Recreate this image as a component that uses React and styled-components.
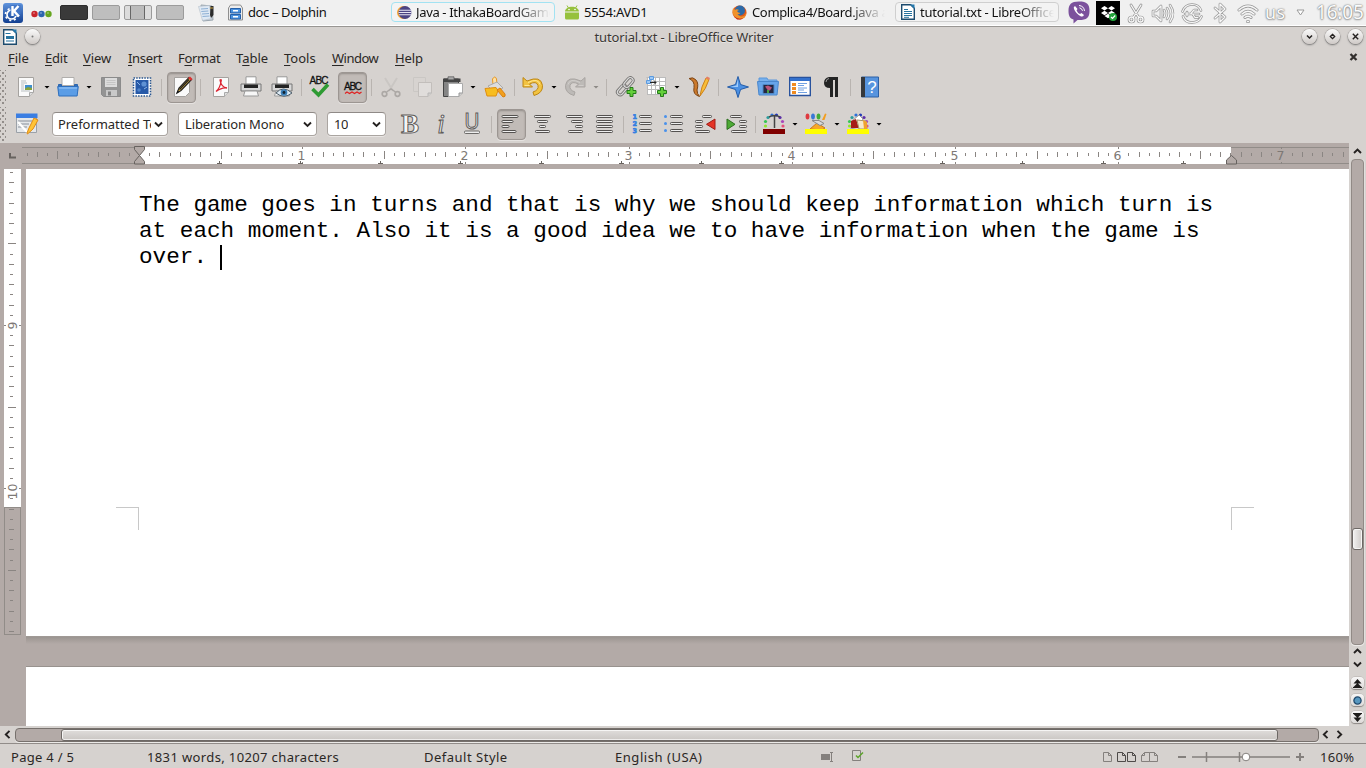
import React from "react";
import styled, { createGlobalStyle, css } from "styled-components";

const UI = `"Noto Sans", "Open Sans", sans-serif`;
const BG = "#d6d2cf";
const TAUPE = "#b3aaa7";

const Global = createGlobalStyle`
  * { box-sizing: border-box; }
  body { margin: 0; background: ${BG}; overflow: hidden; }
  svg { display: block; flex: none; overflow: visible; }
`;

const Desktop = styled.div`
  width: 1366px;
  height: 768px;
  display: flex;
  flex-direction: column;
  background: ${BG};
  color: #2a2725;
  font: 13px/18px ${UI};
  white-space: nowrap;
  overflow: hidden;
`;

/* ---------- desktop panel ---------- */
const Panel = styled.header`
  height: 27px;
  flex: none;
  display: flex;
  align-items: flex-start;
  padding-left: 3px;
  background: #f0f0f0;
  border-bottom: 1px solid #999693;
  box-shadow: inset 0 -1px #fff;
`;
const PanelItem = styled.div`
  height: 25px;
  width: ${(p) => p.$w}px;
  margin-left: ${(p) => p.$gap || 0}px;
  flex: none;
  display: flex;
  align-items: center;
`;
const Pager = styled.div`
  display: flex;
  gap: 4px;
  height: 25px;
  align-items: center;
  margin-left: 8px;
`;
const PagerDesk = styled.div`
  width: 28px;
  height: 15px;
  border-radius: 2px;
  border: 1px solid ${(p) => (p.$active ? "#2d2d2d" : "#9b9b9b")};
  background: ${(p) => (p.$active ? "#3a3a3a" : p.$split ? "linear-gradient(90deg,#dcdcdc 5px,#666 5px,#666 6px,#bcbcbc 6px,#bcbcbc 19px,#666 19px,#666 20px,#dcdcdc 20px)" : "#bebebe")};
`;
const Task = styled.div`
  width: 164px;
  height: 20px;
  margin: 2px 0 0 ${(p) => p.$gap}px;
  padding: 0 4px 0 5px;
  flex: none;
  display: flex;
  align-items: center;
  gap: ${(p) => p.$inner || 5}px;
  border: 1px solid ${(p) => p.$edge || "transparent"};
  border-radius: 4px;
  background: ${(p) => (p.$edge ? "#f3f3f3" : "transparent")};
  color: #111;
`;
const TaskText = styled.span`
  flex: 1;
  overflow: hidden;
  letter-spacing: ${(p) => p.$ls || 0}px;
  ${(p) => p.$fade && css`mask-image: linear-gradient(90deg, #000 calc(100% - 36px), transparent);`}
`;
const TrayText = styled.span`
  color: #fbfbfb;
  font: ${(p) => p.$size}px/25px ${UI};
  letter-spacing: ${(p) => p.$ls || 0}px;
  text-shadow: 0 0 1px #777, 0 0 2px #888, 0 1px 2px #aaa;
`;

/* ---------- window frame ---------- */
const TitleBar = styled.div`
  height: 19px;
  flex: none;
  display: flex;
  align-items: center;
  justify-content: space-between;
  padding: 0 3px;
`;
const TitleSide = styled.div`
  width: 70px;
  display: flex;
  align-items: center;
  justify-content: ${(p) => (p.$end ? "flex-end" : "flex-start")};
  gap: ${(p) => p.$gap}px;
`;
const Title = styled.div`
  padding-left: 2px;
  letter-spacing: -0.13px;
  color: #3a3735;
  text-shadow: 0 1px #e8e5e3;
`;
const RoundButton = styled.span`
  width: 15px;
  height: 15px;
  border-radius: 50%;
  display: grid;
  place-items: center;
  background: linear-gradient(#fafafa, #cfcac7);
  box-shadow: 0 1px 2px #777, 0 0 0 0.5px #a9a5a2;
`;
const MenuBar = styled.nav`
  height: 24px;
  flex: none;
  display: flex;
  align-items: center;
  padding: 0 8px 0 8px;
`;
const MenuItem = styled.span`
  width: ${(p) => p.$w}px;
  letter-spacing: ${(p) => p.$ls || 0}px;
  u { text-decoration-thickness: 1px; text-underline-offset: 2px; }
`;
const Grow = styled.div`flex: 1;`;

/* ---------- toolbars ---------- */
const Toolbar = styled.div`
  height: ${(p) => p.$h}px;
  padding-top: ${(p) => p.$pt || 0}px;
  flex: none;
  display: flex;
  align-items: center;
`;
const Grip = styled.div`
  width: 8px;
  height: 34px;
  background: radial-gradient(circle, #918c89 0.7px, transparent 1.1px) 0 0 / 6px 6px,
    radial-gradient(circle, #918c89 0.7px, transparent 1.1px) 3px 3px / 6px 6px;
  clip-path: inset(0 2px 0 0);
`;
const Tool = styled.div`
  width: ${(p) => (p.$on ? 29 : 22)}px;
  height: ${(p) => (p.$on ? 31 : 22)}px;
  margin-left: ${(p) => p.$gap}px;
  flex: none;
  display: grid;
  place-items: center;
  opacity: ${(p) => (p.$off ? 0.65 : 1)};
  ${(p) => p.$on && css`
    background: #c1bbb7;
    border: 1px solid #9c9692;
    border-radius: 4px;
    box-shadow: inset 0 1px 2px #938d89, 0 1px #e6e3e1;
  `}
`;
const Sep = styled.div`
  width: 1px;
  height: 17px;
  margin-left: ${(p) => p.$gap}px;
  background: #b9b4b0;
`;
const Drop = styled.div`
  width: 6px;
  height: 3px;
  margin-left: ${(p) => p.$gap}px;
  background: ${(p) => (p.$off ? "#8d8986" : "#000")};
  clip-path: polygon(0 0, 100% 0, 50% 100%);
`;
const Combo = styled.div`
  width: ${(p) => p.$w}px;
  height: 24px;
  margin-left: ${(p) => p.$gap}px;
  padding: 0 4px 0 ${(p) => p.$pad || 6}px;
  flex: none;
  display: flex;
  align-items: center;
  justify-content: space-between;
  gap: 3px;
  background: #fff;
  border: 1px solid #aaa5a1;
  border-top-color: #8f8a87;
  border-radius: 4px;
  box-shadow: 0 1px #e9e6e4;
`;
const ComboText = styled.span`
  overflow: hidden;
  letter-spacing: ${(p) => p.$ls || 0}px;
`;

/* ---------- document ---------- */
const Work = styled.main`
  height: 583px;
  flex: none;
  display: flex;
`;
const Canvas = styled.section`
  width: 1349px;
  display: flex;
  flex-direction: column;
  background: ${TAUPE};
`;
const RulerRow = styled.div`
  height: 26px;
  flex: none;
  display: flex;
  padding-top: 4px;
`;
const RulerCorner = styled.div`
  width: 22px;
  height: 17px;
  padding: 6px 0 0 9px;
`;
const HRuler = styled.div`
  width: 1327px;
  height: 17px;
  background: linear-gradient(90deg, transparent 117px, #fff 117px, #fff 1209px, transparent 1209px),
    linear-gradient(#918c88 1px, transparent 1px, transparent 16px, #918c88 16px);
`;
const DocRow = styled.div`
  flex: 1;
  display: flex;
`;
const VRuler = styled.div`
  width: 17px;
  height: 466px;
  margin: 0 5px 0 4px;
  border: solid #918c88;
  border-width: 0 1px 1px;
  border-image: linear-gradient(#fff 338px, #918c88 338px) 1;
  background: linear-gradient(#fff 338px, #918c88 338px, #918c88 339px, transparent 339px);
`;
const Pages = styled.div`
  flex: 1;
  display: flex;
  flex-direction: column;
`;
const Page = styled.article`
  height: 467px;
  padding: 23px 0 0 113px;
  background: #fff;
  color: #000;
`;
const Paragraph = styled.p`
  margin: 0;
  height: 78px;
  font: 22.67px/26px "Liberation Mono", monospace;
  white-space: pre;
`;
const Caret = styled.span`
  display: inline-block;
  width: 2px;
  height: 25px;
  margin-left: -1px;
  vertical-align: -7px;
  background: #000;
`;
const Crops = styled.div`
  display: flex;
  justify-content: space-between;
  width: 1138px;
  margin: 237px 0 0 -23px;
`;
const Crop = styled.span`
  width: 23px;
  height: 23px;
  border-top: 1px solid #c8c8c8;
  ${(p) => (p.$left ? "border-left" : "border-right")}: 1px solid #c8c8c8;
`;
const PageGap = styled.div`
  height: 31px;
  border-bottom: 1px solid #98928e;
  background: linear-gradient(#a59e9a 0, #9a9490 1px, #a29b97 3px, ${TAUPE} 8px);
`;
const NextPage = styled.article`
  flex: 1;
  background: #fff;
`;

/* ---------- scroll bars and status ---------- */
const VScroll = styled.aside`
  width: 17px;
  display: flex;
  flex-direction: column;
  align-items: center;
  padding-top: 5px;
`;
const VTrough = styled.div`
  width: 13px;
  height: 486px;
  flex: none;
  margin: 4px 0 3px;
  padding: 370px 1px 0;
  border: 1px solid #918a86;
  border-radius: 4px;
  background: ${TAUPE};
  box-shadow: 0 1px #eceae8, 1px 0 #e2dfdd;
`;
const VThumb = styled.div`
  height: 22px;
  margin: -2px -1px 0;
  border: 1px solid #6d6865;
  border-radius: 3px;
  background: linear-gradient(90deg, #f2f1f0, #cfcbc8);
  box-shadow: inset 0 0 0 1px #f6f5f4;
`;
const NavButton = styled.div`
  width: 13px;
  height: 12px;
  margin-top: ${(p) => p.$gap}px;
  flex: none;
  display: grid;
  place-items: center;
  border-radius: 4px;
  background: linear-gradient(#f7f6f6, #dddad8);
  box-shadow: 0 1px 1px #8d8885, 0 0 0 0.5px #b5b0ad;
`;
const HScroll = styled.div`
  height: 17px;
  flex: none;
  display: flex;
  align-items: center;
  padding-left: 4px;
`;
const HTrough = styled.div`
  width: 1304px;
  height: 14px;
  margin: 0 3px 0 4px;
  padding-left: 45px;
  border: 1px solid #77716d;
  border-radius: 4px;
  background: ${TAUPE};
  box-shadow: 0 1px #eceae8;
`;
const HThumb = styled.div`
  width: 1217px;
  height: 12px;
  border: 1px solid #6d6865;
  border-radius: 3px;
  background: linear-gradient(#e0dddb, #cac6c3);
  box-shadow: inset 0 1px #f6f5f4, inset 1px 0 #f6f5f4, inset 0 -1px #eeeceb;
`;
const ScrollArrow = styled.span`margin-right: ${(p) => p.$gap || 0}px;`;
const StatusBar = styled.footer`
  height: 25px;
  flex: none;
  display: flex;
  align-items: center;
  border-top: 1px solid #918c89;
  padding: 1px 0 0 11px;
`;
const StatusText = styled.span`
  width: ${(p) => p.$w}px;
  flex: none;
  letter-spacing: ${(p) => p.$ls || 0}px;
`;
const StatusIcon = styled.span`margin-right: ${(p) => p.$gap}px;`;

/* ---------- drawings ---------- */
const I = ({ s = 22, children, ...r }) => (
  <svg width={s} height={s} viewBox="0 0 22 22" fill="none" {...r}>{children}</svg>
);
const Chevron = ({ d = "M1 1.500 4.500 5 8 1.500", w = 9, h = 7, c = "#242120", sw = 1.9 }) => (
  <svg width={w} height={h} viewBox={`0 0 ${w} ${h}`} fill="none" stroke={c} strokeWidth={sw}><path d={d} /></svg>
);
const UP = "M1 5 4.500 1.500 8 5";
const Left = () => <Chevron w={7} h={9} d="M5.500 .8 1.800 4.500 5.500 8.200" />;
const Right = () => <Chevron w={7} h={9} d="M1.500 .8 5.200 4.500 1.500 8.200" />;

const Kde = () => (
  <svg width="20" height="20" viewBox="0 0 20 20">
    <defs><linearGradient id="kg" x2="0" y2="1"><stop stopColor="#5f93dc" /><stop offset="1" stopColor="#123f91" /></linearGradient></defs>
    <rect width="20" height="20" rx="3" fill="url(#kg)" />
    <circle cx="8.500" cy="11.500" r="4.500" fill="none" stroke="#fff" strokeWidth="1.700" />
    <circle cx="8.500" cy="11.500" r="6" fill="none" stroke="#fff" strokeWidth="1.700" strokeDasharray="2 2.710" />
    <path d="M7.500 2h10v9l-3 2H7.500z" fill="#4276c8" />
    <path d="M9.500 3v10M15.500 3l-4.500 5 5 5.500" fill="none" stroke="#fff" strokeWidth="2.400" />
  </svg>
);
const Dots = () => (
  <svg width="21" height="8" viewBox="0 0 21 8">
    <circle cx="3.500" cy="5" r="3.200" fill="#c9252c" /><circle cx="10.500" cy="5" r="3.200" fill="#2c65ae" /><circle cx="17.500" cy="5" r="3.200" fill="#65a51e" />
    <path d="M2 4h2M9 4h2M16 4h2" stroke="#fff" strokeOpacity=".5" />
  </svg>
);
const Notes = () => (
  <svg width="17" height="18" viewBox="0 0 17 18">
    <path d="M3 1l11 1 1 14-10 1z" fill="#c9d0d8" stroke="#9aa5ae" />
    <path d="M.5 2.500l11-1 2 13-9 2z" fill="#dfe9f4" stroke="#b6c0ca" strokeWidth=".6" />
    <path d="M3 5l7-.5M3.300 7.500l7-.5M4 10l7-.5M4.500 12.500l7-.5" stroke="#8eb0d4" />
    <path d="M12.500 2h3v9l-2.500 3-1-3z" fill="#2c2c2c" /><path d="M12 4h3" stroke="#c8a23c" />
  </svg>
);
const Cabinet = () => (
  <svg width="15" height="17" viewBox="0 0 15 17">
    <path d="M2.500 1h10l2 3v12H.5V4z" fill="#ececec" stroke="#8f8f8f" />
    <path d="M2.500 4.500h10v4.500h-10zM2.500 10.500h10v4.500h-10z" fill="#4b92df" stroke="#245fa8" />
    <path d="M5 6h5v1.600H5zM5 12h5v1.600H5z" fill="#fff" />
  </svg>
);
const Eclipse = () => (
  <svg width="15" height="15" viewBox="0 0 15 15">
    <circle cx="6.500" cy="7.500" r="6.500" fill="#f2a331" /><circle cx="8" cy="7.500" r="6.500" fill="#4b4384" />
    <path d="M2 5.200h12M1.500 7.500h13M2 9.800h12" stroke="#e6e3f2" strokeWidth="1.100" />
  </svg>
);
const Android = () => (
  <svg width="14" height="15" viewBox="0 0 14 15">
    <path d="M0 6.500C.3 0 13.700 0 14 6.500zM0 7.500h14V13q0 1.500-1.500 1.500h-11Q0 14.500 0 13z" fill="#96c13d" />
    <path d="M3.500 3 2 .5M10.500 3 12 .5" stroke="#96c13d" /><circle cx="4" cy="4.500" r=".8" fill="#fff" /><circle cx="10" cy="4.500" r=".8" fill="#fff" />
  </svg>
);
const Firefox = () => (
  <svg width="15" height="15" viewBox="0 0 15 15">
    <circle cx="7.500" cy="7.500" r="7" fill="#dd5a1c" /><circle cx="8" cy="5.500" r="5" fill="#2c6aa8" />
    <path d="M1 3q-1.500 6 2 9 4 3.500 8.500 1 3-2 3-6-1.500 5-5.500 4.500-2.500-.3-3.500-2.500 2 .5 3-1Q6 8 5 6l2-1Q4.500 3.500 3 5z" fill="#f0922b" />
    <path d="M2 11q4 4 9 2l-2 1.500H5z" fill="#c6301d" />
  </svg>
);
const WriterDoc = ({ solid }) => (
  <svg width="14" height="16" viewBox="0 0 14 16">
    <path d="M.7.7h9L13.300 4.300v11H.7z" fill="#fff" stroke="#1c4b6e" strokeWidth="1.400" />
    <path d="M9 .5h4.500v4.500z" fill="#2479ad" />
    {solid ? <path d="M3 7h8v3H3zM3 11.500h8v1H3zM2.500 4h5v1h-5z" fill="#26739f" /> : <path d="M3 5.500h4M3 7.500h8M3 9.500h8M3 11.500h8M3 13.300h5" stroke="#26739f" />}
  </svg>
);
const Viber = () => (
  <svg width="22" height="23" viewBox="0 0 22 23">
    <path d="M11 .5C3 .5.5 3.500.5 10c0 5 1.500 7.500 5 8.500V22.500l4-3.500c9 .3 12-2 12-9S19 .5 11 .5z" fill="#7b519c" />
    <path d="M7 5q-2 1-1 3 2 5 7 7.500 2 .5 3-1.500l-2.500-2-1.500 1q-2.500-1-3.500-3.800L9.500 8z" fill="#fff" />
    <path d="M11 4.500q5 .5 5.500 5.500M11.500 6.800q2.500.5 3 3" fill="none" stroke="#fff" />
  </svg>
);
const Dropbox = () => (
  <svg width="24" height="24" viewBox="0 0 24 24">
    <rect width="24" height="24" fill="#000" />
    <path d="M8.500 5 12 7.300 8.500 9.500 5 7.300zM15.500 5 19 7.300 15.500 9.500 12 7.300zM8.500 9.700l3.500 2.200-3.500 2.300L5 12zM15.500 9.700 19 12l-3.500 2.200-3.500-2.300zM8.500 15l3.500-2.200 3.500 2.200-3.500 2.300z" fill="#fff" />
    <circle cx="17" cy="16" r="4" fill="#22a23a" /><path d="M15 16l1.500 1.500 2.700-3" stroke="#fff" fill="none" strokeWidth="1.200" />
  </svg>
);
const Outline = ({ d, w = 22, sw = 2 }) => (
  <svg width={w} height="24" viewBox={`0 0 ${w} 24`} fill="none" strokeLinecap="round" strokeLinejoin="round">
    <path d={d} stroke="#979797" strokeWidth={sw + 1.4} /><path d={d} stroke="#f8f8f8" strokeWidth={sw} />
  </svg>
);
const sheet = <path d="M3.500 1.500h15v15l-4 4h-11z" fill="#fafafa" stroke="#a5a29f" />;
const New = () => <I>{sheet}<path d="M6 5h5M6 7h6M6 9h3M6 11h3M6 13h3M6 15h9" stroke="#b9bfc2" /><path d="M10 9h7v5h-7z" fill="#3f8fce" /><path d="M10 12.500l3-1.500 4 1v2h-7z" fill="#87a43b" /><path d="M18.500 16.500h-4v4" fill="#ddd" stroke="#aaa" /></I>;
const Open = () => <I><path d="M5 1.500h12v8H5z" fill="#fff" stroke="#b0aeac" /><path d="M1.500 8.500h3v3h13v-3h3v6h-19z" fill="#346fba" stroke="#2b65ad" /><path d="M.7 10.500h20.600l-1.200 9.500H1.900z" fill="#5b9de6" stroke="#2f6fbd" /><path d="M2 12h18" stroke="#9fcbfa" /></I>;
const Save = () => <I><path d="M2 1.500h18.500v19H3.500l-2-2v-17z" fill="#949494" stroke="#8b8b8b" /><path d="M5 2h12v9H5z" fill="#dcdcdc" /><path d="M6.500 4.500h9M6.500 6.500h9M6.500 8.500h9" stroke="#c5c5c5" /><path d="M6 14h11v6H6z" fill="#c9c9c9" /><path d="M8 15.500h3v4H8z" fill="#838383" /></I>;
const Stamp = () => <I><rect x="2.500" y="2" width="17" height="18" fill="#fff" stroke="#28568f" strokeWidth="1.500" strokeDasharray="1.500 1.200" /><path d="M4.500 4h13v14h-13z" fill="#2659a8" /><circle cx="13" cy="8" r="2.600" fill="#5f92d4" /><circle cx="8" cy="14" r="1.800" fill="#4f83c9" /><path d="M6 6l3 3M13 13l3-2" stroke="#8db5e7" /></I>;
const Edit = () => <I>{sheet}<path d="M6 17l2-5L18 1.500l2.500 2L10 14.500z" fill="#e8bb3c" stroke="#242424" strokeWidth="1.200" /><path d="M8.500 13.500 18 3.500" stroke="#222" strokeWidth="1.300" /><path d="M17 2l2-1.500L21.500 3 20 4.700z" fill="#d33" /><path d="M5.500 17.500l2.500-1.500-1.500-1.500z" fill="#111" /></I>;
const Pdf = () => <I>{sheet}<path d="M18.500 16.500h-4v4" fill="#ddd" stroke="#aaa" /><path d="M6 15.500q4-3 5.300-11 0-1.500-1.300-.5 1 7 7 8-5-1-11 3.500z" stroke="#dc2331" strokeWidth="1.300" /></I>;
const Print = ({ eye }) => <I><path d="M6 .8h10V9H6z" fill="#fff" stroke="#999" /><path d="M1 8h20v7H1z" fill="#d8d8d8" stroke="#777" /><path d="M4 8.500h14v3.500H4z" fill="#242424" /><path d="M5 15h12l1.500 5h-15z" fill="#f7f7f7" stroke="#999" />{eye && <><path d="M5 17q7-8 16 0-8 6.500-16 0z" fill="#dceaf4" stroke="#4d5c68" /><circle cx="13" cy="16.500" r="3.300" fill="#3b7fb8" /><circle cx="13" cy="16.500" r="1.400" fill="#10202e" /></>}</I>;
const abc = { fontFamily: "Liberation Sans, sans-serif", fontSize: 10, fill: "#111", stroke: "#111", strokeWidth: 0.3 };
const Spell = () => <I><text x=".5" y="8" textLength="19" {...abc}>ABC</text><path d="M3.500 13l6 6L19 8.500" stroke="#2e9b33" strokeWidth="3.600" /></I>;
const AutoSpell = () => <I><text x="2" y="14" textLength="18" {...abc}>ABC</text><path d="M3 17.500l2-1.500L7.500 17.500 10 16l2.500 1.500 2.500-1.500L17.500 17.500l2-1.500" stroke="#e02020" strokeWidth="1.200" /></I>;
const Cut = () => <I stroke="#96928f"><path d="M5 2l8 13M17 2 9 15" stroke="#c4c1be" strokeWidth="2" /><circle cx="4.500" cy="18" r="2.300" strokeWidth="1.700" /><circle cx="17.500" cy="18" r="2.300" strokeWidth="1.700" /><path d="M6.500 16l4.500-3 4.500 3" strokeWidth="1.500" /></I>;
const Copy = () => <I fill="#dedbd9"><path d="M2.500 1.500h12v14h-12z" stroke="#c5c2bf" fill="#d8d5d2" /><path d="M7.500 6.500h13V17l-3.500 3.500H7.500z" stroke="#b8b4b1" fill="#e6e4e2" /><path d="M20.500 17H17v3.500" stroke="#aaa" fill="#ccc" /></I>;
const Paste = () => <I><path d="M1.500 3h15v17.500h-15z" fill="#858585" stroke="#444" /><path d="M1.500 2.500h17V6h-17z" fill="#444" /><path d="M6 .8h6v3H6z" fill="#aaa" stroke="#555" strokeWidth=".7" /><path d="M6.500 7.500h14v9.500l-3.500 3.500H6.500z" fill="#fff" stroke="#aaa" /><path d="M20.500 17H17v3.500" fill="#ccc" stroke="#999" /></I>;
const Brush = () => <I><path d="M9 9 8.500 3Q11-1 12.500 3L13 9z" fill="#ffe1a6" stroke="#e59724" /><path d="M4 10l9-4 6 6-9 4z" fill="#ddd" stroke="#aaa" /><path d="M1 12.500l11-1 2 3-2 5.500H3z" fill="#f7bd20" stroke="#e08e10" /><path d="M13 14l3-2 5 6q1 3-2 3z" fill="#f2a01e" stroke="#d98010" /></I>;
const Undo = ({ grey }) => <I><g transform={grey ? "translate(22 0) scale(-1 1)" : undefined}><path d="M1 1.500V11h9.500L7.500 8q7-3.500 8.500 1.500 1 4.500-5 6.500l1 3.500Q21 17 20.500 9.500 19-1 5 5z" fill={grey ? "#bdbab7" : "#f2c341"} stroke={grey ? "#a9a5a2" : "#bd8614"} /><path d="M2.500 9.500h5M6 6.500q10-5 12 2" stroke={grey ? "#d0cdca" : "#ffe691"} /></g></I>;
const plus = (x, y) => <path d={`M${x} ${y + 3}h3v-3h3v3h3v3h-3v3h-3v-3h-3z`} fill="#64cf3a" stroke="#247d19" strokeWidth="1" />;
const Link = () => <I><g fill="none"><rect x="-5.500" y="-2.800" width="11" height="5.600" rx="2.600" transform="translate(7 14) rotate(-48)" stroke="#767472" strokeWidth="2.800" /><rect x="-5.500" y="-2.800" width="11" height="5.600" rx="2.600" transform="translate(7 14) rotate(-48)" stroke="#dcdcdc" strokeWidth="1.200" /><rect x="-5.500" y="-2.800" width="11" height="5.600" rx="2.600" transform="translate(13.500 6.500) rotate(-48)" stroke="#767472" strokeWidth="2.800" /><rect x="-5.500" y="-2.800" width="11" height="5.600" rx="2.600" transform="translate(13.500 6.500) rotate(-48)" stroke="#dcdcdc" strokeWidth="1.200" /></g>{plus(12, 11.500)}</I>;
const Table = () => <I><path d="M1 1h19v18H1z" fill="#fff" /><path d="M.5 1.500h19.500M1 5.500h19M1 9.500h19M1 13.500h19M1 18.500h19M1.500 1v18M5.500 1v18M9.500 1v18M13.500 1v18M19.500 1v18" stroke="#bbb" /><path d="M3.500.5h4v3h-4zM.5 4.500h4v3h-4z" fill="#9cc8f7" stroke="#5a9be0" /><path d="M4 6.500h6M8 4.500l2 2-2 2" stroke="#222" />{plus(11.500, 11.500)}</I>;
const Draw = () => <I><path d="M1 2.500q4-2 7 1.500t1 10q0 4 2.500 6.500-7-2-5.500-9Q7 5 1 2.500z" fill="#cc7a2c" stroke="#7c4516" /><path d="M12 20q1-9 6-18l3 1.500Q18 13 12 20z" fill="#f8be38" stroke="#cd811c" /><path d="M17.500 2.500l1.500-2 3 1.500-1 2z" fill="#e57f62" /></I>;
const Nav = () => <I><path d="M11 .5 13.500 8.500 21.500 11l-8 2.500L11 21.500 8.500 13.500.5 11l8-2.500z" fill="#4b90e3" stroke="#245ca8" /><path d="M11 3l-1.500 6.500L3 11l8 0z" fill="#a3cdfa" /></I>;
const Gallery = () => <I><path d="M2 2h8l1 2h9v6H2z" fill="#77b0ed" stroke="#5b97da" /><path d="M.5 5.500h21L20 19H2z" fill="#67a5e9" stroke="#4a87cc" /><path d="M6 8.500h11v9H6z" fill="#252741" stroke="#4f88c6" /><path d="M8 10.500l3-1 4 2-2 3-2 0z" fill="#bb5479" /><path d="M11 14v3" stroke="#4aa044" strokeWidth="2" /></I>;
const Data = () => <I><path d="M.7 1.500h20.600v18H.7z" fill="#fff" stroke="#28529d" strokeWidth="1.400" /><path d="M1 2h20v3H1z" fill="#3471cd" /><path d="M3 7h4v3H3zM3 11h4v3H3zM3 15h4v3H3z" fill="#f08b20" /><path d="M9 7.500h9M9 9.500h6M9 12h9M9 14h6M9 16.500h9" stroke="#71a1e2" /></I>;
const Pilcrow = () => <I><path d="M17 1H9Q4 2 4 7t6 5v9h3V4h2v17h3V1z" fill="#242424" /><path d="M6 6q0-3 3-3.500" stroke="#999" /></I>;
const Help = () => <I><path d="M2.500 1h17v20h-17z" fill="#5794de" stroke="#2d60a6" /><path d="M2 1h4v20H2z" fill="#35383c" /><text x="13" y="17" textAnchor="middle" fontFamily="Liberation Sans, sans-serif" fontSize="17" fill="#fff">?</text></I>;
const Styles = () => <I><path d="M.5 2.500h20v17H.5z" fill="#e4e7ea" stroke="#9ba1a8" /><path d="M0 .5h21.500v4.500H0z" fill="#3b7ee2" /><path d="M2 8h14M2 11h11M2 14h9" stroke="#a7adb5" strokeWidth="1.700" /><path d="M2 9l9 10" stroke="#fff" strokeWidth="2.200" /><path d="M11 20l2-5L18 5l4 2-5 9-5.500 5z" fill="#ffc436" stroke="#e18b14" /></I>;
const Letter = ({ c, italic, line }) => <I><text x="11" y={line ? 15.5 : 20} textAnchor="middle" fontFamily={line ? "Noto Sans, sans-serif" : "Liberation Serif, serif"} fontSize={line ? 21 : 27} fontWeight={c === "B" ? 700 : 400} fontStyle={italic ? "italic" : "normal"} fill="#f5f5f5" stroke="#5f5c5a" strokeWidth="1">{c}</text>{line && <rect x="3.500" y="18" width="15" height="2.500" rx="1" fill="#eee" stroke="#5f5c5a" strokeWidth=".9" />}</I>;
const Bars = ({ rows }) => rows.map(([x, y, w], i) => <rect key={i} x={x + 0.5} y={y + 0.5} width={w - 1} height="2" rx=".8" fill="#efefef" stroke="#555250" strokeWidth="1" />);
const Align = ({ k }) => {
  const at = (w) => (k === "r" ? 20 - w : k === "c" ? 11.5 - w / 2 : k === "l" ? 0.5 : 3);
  const rows = k === "j" ? [17, 17, 17, 17] : k === "c" ? [17, 11, 7, 15] : [17, 12, 8, 15];
  return <I><Bars rows={rows.map((w, i) => [at(w), 2 + i * 5, w])} /></I>;
};
const List = ({ num }) => <I><Bars rows={[[7, 2, 13], [7, 9, 13], [7, 16, 13]]} />{[3.5, 10.5, 17.5].map((y, i) => num ? <text key={y} x="0.500" y={y + 2.5} fontFamily="DejaVu Sans, sans-serif" fontWeight="700" fontSize="6.500" fill="#3d8bea" stroke="#2d7ae0" strokeWidth=".6">{i + 1}</text> : <circle key={y} cx="2.500" cy={y} r="1.500" fill="#4991eb" />)}</I>;
const Dent = ({ right }) => <I><Bars rows={right ? [[5, 2, 12], [14, 7, 8], [14, 12, 8], [6, 17, 16]] : [[8, 2, 10], [1, 7, 8], [1, 12, 8], [1, 17, 15]]} />{right ? <path d="M2 6v10.500l8-5.200z" fill="#4eaa35" stroke="#2c6f1d" /> : <path d="M21 6v10.500l-8.500-5.200z" fill="#e53527" stroke="#a01c16" />}</I>;
const ring = [["#8fe82f", 2.5, 13], ["#34c653", 2.5, 8.5], ["#2a9c9c", 5, 4.5], ["#2c70d8", 9, 2], ["#2438b8", 13.5, 2], ["#5c2ea8", 17, 4.5], ["#a846bb", 19.5, 8.5], ["#e8517e", 20, 13]];
const Ring = () => ring.map(([c, x, y]) => <circle key={c} cx={x} cy={y} r="1.600" fill={c} />);
const FontColor = () => <I><Ring /><path d="M6 4q5.500-3 11 0M11.500 2v13" stroke="#444" strokeWidth="1.500" /><path d="M0 16h22v5H0z" fill="#800000" /></I>;
const Highlight = () => <I><ellipse cx="2.500" cy="3.500" rx="1.900" ry="2.900" fill="#df3a40" /><ellipse cx="8" cy="3.500" rx="1.900" ry="2.900" fill="#3978d6" /><ellipse cx="13.500" cy="3.500" rx="1.900" ry="2.900" fill="#42ad38" /><path d="M17 7l3-6.500L21.500 1l-2 6z" fill="#f29e1f" /><path d="M5 16l7-6 8 5-3 2z" fill="#f7a828" stroke="#cc7b17" /><path d="M7 7.500l8 5 4-2-5-3z" fill="#d9d9d9" stroke="#888" /><path d="M0 16h22v5H0z" fill="#ffff00" /></I>;
const BackColor = () => <I><Ring /><path d="M5 8l7-6 4 4-5 8-7 2z" fill="#fff" stroke="#999" /><path d="M4 8l5-2 3 9H4z" fill="#a71d17" /><path d="M10 7l9 1 1 8h-8z" fill="#f7e9cc" stroke="#a79667" /><path d="M16 7l4 2v7h-3z" fill="#f0a22e" /><path d="M0 16h22v5H0z" fill="#ffff00" /></I>;

const INCH = 163.2;
const HTicks = () => {
  const zero = 117.5;
  const out = [];
  for (let k = -11; k <= 119; k++) {
    const x = Math.floor(zero + (k * INCH) / 16);
    if (x < 3 || x > 1325 || k === 0) continue;
    if (k % 16 === 0) {
      out.push(<path key={k} d={`M${x + 0.5} 0v2M${x + 0.5} 15v2`} />);
      out.push(<text key={`n${k}`} x={x - 0.5} y="13" textAnchor="middle" stroke="none" fill="#7d7875" fontSize="12.500" fontFamily="DejaVu Sans, sans-serif">{k / 16}</text>);
    } else {
      const [a, b] = k % 8 === 0 ? [4, 12] : k % 2 === 0 ? [5, 10] : [6, 9];
      out.push(<path key={k} d={`M${x + 0.5} ${a}V${b}`} />);
    }
  }
  const tabs = [];
  for (let t = 1; t < 14; t++) {
    const x = Math.floor(zero + t * 80.3) + 0.5;
    tabs.push(<path key={t} d={`M${x} 14v2.500M${x - 2.5} 16.500h5`} />);
  }
  return (
    <svg width="1327" height="17" viewBox="0 0 1327 17" fill="none" stroke="#8a8582">
      {out}<g stroke="#68635f">{tabs}</g>
      <path d="M112.500-.5h10V2.500L117.500 8.500l5 6v2.500h-10v-2.500l5-6-5-6z" fill={TAUPE} stroke="#67625f" />
      <path d="M1204.500 17v-4l5-4.500 5 4.500v4z" fill={TAUPE} stroke="#67625f" />
    </svg>
  );
};
const VTicks = () => {
  const out = [];
  for (let k = 129; k <= 174; k++) {
    const y = Math.floor(319.6 + ((k - 160) * INCH) / 16) + 0.5;
    if (y < 1 || y > 464) continue;
    if (k % 16 === 0) {
      out.push(<path key={k} d={`M-1 ${y}h2M14 ${y}h2`} />);
      out.push(<text key={`n${k}`} transform={`translate(11.500 ${k === 160 ? y + 3 : y}) rotate(-90)`} textAnchor="middle" stroke="none" fill="#7d7875" fontSize="12.500" fontFamily="DejaVu Sans, sans-serif">{k / 16}</text>);
    } else {
      const [a, b] = k % 8 === 0 ? [3, 11] : k % 2 === 0 ? [4, 9] : [5, 8];
      out.push(<path key={k} d={`M${a} ${y}H${b}`} />);
    }
  }
  return <svg width="15" height="465" viewBox="0 0 15 465" stroke="#8a8582">{out}</svg>;
};
const PageMark = ({ x = 0.5, c }) => <path d={`M${x} .5h5l3 3v6h-8zM${x + 5} .5v3h3`} stroke={c} />;

const menus = [["", "F", "ile", 37], ["", "E", "dit", 38, -0.2], ["", "V", "iew", 45, -0.1], ["", "I", "nsert", 50, -0.3], ["F", "o", "rmat", 58, -0.3], ["T", "a", "ble", 48], ["", "T", "ools", 48], ["", "W", "indow", 63, -0.5], ["", "H", "elp", 30, -0.1]];

export default function App() {
  return (
    <Desktop>
      <Global />
      <Panel>
        <PanelItem $w={20}><Kde /></PanelItem>
        <PanelItem $w={21} $gap={8}><Dots /></PanelItem>
        <Pager><PagerDesk $active /><PagerDesk /><PagerDesk $split /><PagerDesk /></Pager>
        <PanelItem $w={17} $gap={14}><Notes /></PanelItem>
        <Task $gap={7}><Cabinet /><TaskText $ls={-0.4}>doc – Dolphin</TaskText></Task>
        <Task $gap={5} $edge="#a2e2f2" $inner={4}><Eclipse /><TaskText $fade $ls={-0.35}>Java - IthakaBoardGame</TaskText></Task>
        <Task $gap={4}><Android /><TaskText $ls={-0.25}>5554:AVD1</TaskText></Task>
        <Task $gap={3}><Firefox /><TaskText $fade $ls={-0.35}>Complica4/Board.java at</TaskText></Task>
        <Task $gap={5} $edge="#cfcfcf"><WriterDoc /><TaskText $fade $ls={-0.25}>tutorial.txt - LibreOffice</TaskText></Task>
        <PanelItem $w={22} $gap={9}><Viber /></PanelItem>
        <PanelItem $w={24} $gap={6}><Dropbox /></PanelItem>
        <PanelItem $w={18} $gap={7}><Outline w={18} sw={1.3} d="M4 4l8 13M14 4 6 17M7 18.500a2.500 2.500 0 1 1-5 0 2.500 2.500 0 0 1 5 0M16 18.500a2.500 2.500 0 1 1-5 0 2.500 2.500 0 0 1 5 0" /></PanelItem>
        <PanelItem $w={24} $gap={7}><Outline w={24} sw={1.2} d="M1 10h3l5-5v15l-5-5H1zM12 9q2 3 0 7M15 7q4 5.500 0 11M18 4q6 8.500 0 17" /></PanelItem>
        <PanelItem $w={22} $gap={5}><Outline sw={1.2} d="M1.500 10.500Q4 3.500 11 3.500t9 6M20.500 15.500q-2.500 6-9.500 6t-9-6M4 13h14M6 11v4M10 12.500l3-3.500h3M12 13.500l2 3h3" /></PanelItem>
        <PanelItem $w={16} $gap={9}><Outline w={16} sw={1.3} d="M3 7l10 9-5 5V3l5 5-10 9" /></PanelItem>
        <PanelItem $w={22} $gap={9}><Outline sw={1.6} d="M2 9q9-8 18 0M5 13q6-5.500 12 0M8 16.500q3-2.500 6 0M10.500 20.500h1" /></PanelItem>
        <PanelItem $w={24} $gap={6}><TrayText $size={18} $ls={0.3}>us</TrayText></PanelItem>
        <PanelItem $w={10} $gap={7}><svg width="9" height="7" viewBox="0 0 9 7"><path d="M1 1h7L4.500 6z" fill="#fff" stroke="#999" strokeLinejoin="round" /></svg></PanelItem>
        <PanelItem $w={54} $gap={10}><TrayText $size={19} $ls={-0.2}>16:05</TrayText></PanelItem>
      </Panel>

      <TitleBar>
        <TitleSide $gap={8}>
          <WriterDoc solid />
          <RoundButton><svg width="3" height="3"><circle cx="1.500" cy="1.500" r="1" fill="#777" /></svg></RoundButton>
        </TitleSide>
        <Title>tutorial.txt - LibreOffice Writer</Title>
        <TitleSide $end $gap={8}>
          <RoundButton><Chevron sw={1.5} w={7} h={6} d="M1 1.500 3.500 4 6 1.500" /></RoundButton>
          <RoundButton><Chevron sw={1.3} w={7} h={7} d="M3.500 1.300 5.700 3.500 3.500 5.700 1.300 3.500z" /></RoundButton>
          <RoundButton><Chevron sw={1.4} w={7} h={7} d="M.8 .8l5.400 5.400M6.200 .8 .8 6.200" /></RoundButton>
        </TitleSide>
      </TitleBar>

      <MenuBar>
        {menus.map(([a, u, b, w, ls]) => <MenuItem key={u + b} $w={w} $ls={ls}>{a}<u>{u}</u>{b}</MenuItem>)}
        <Grow />
        <svg width="9" height="10" viewBox="0 0 9 10"><path d="M1.500 1l6 6M7.500 1l-6 6" stroke="#33302e" strokeWidth="2.300" /></svg>
      </MenuBar>

      <Toolbar $h={34}>
        <Grip />
        <Tool $gap={7}><New /></Tool><Drop $gap={7} />
        <Tool $gap={7}><Open /></Tool><Drop $gap={7} />
        <Tool $gap={8}><Save /></Tool>
        <Tool $gap={9}><Stamp /></Tool>
        <Sep $gap={8} /><Tool $on $gap={5}><Edit /></Tool><Sep $gap={4} />
        <Tool $gap={9}><Pdf /></Tool>
        <Tool $gap={8}><Print /></Tool>
        <Tool $gap={9}><Print eye /></Tool>
        <Sep $gap={8} />
        <Tool $gap={7}><Spell /></Tool>
        <Tool $on $gap={7}><AutoSpell /></Tool>
        <Sep $gap={4} />
        <Tool $gap={8} $off><Cut /></Tool>
        <Tool $gap={9} $off><Copy /></Tool>
        <Tool $gap={9}><Paste /></Tool><Drop $gap={6} />
        <Tool $gap={8}><Brush /></Tool>
        <Sep $gap={8} />
        <Tool $gap={7}><Undo /></Tool><Drop $gap={7} />
        <Tool $gap={7}><Undo grey /></Tool><Drop $gap={7} $off />
        <Sep $gap={7} />
        <Tool $gap={8}><Link /></Tool>
        <Tool $gap={9}><Table /></Tool><Drop $gap={6} />
        <Tool $gap={8}><Draw /></Tool>
        <Sep $gap={8} />
        <Tool $gap={8}><Nav /></Tool>
        <Tool $gap={8}><Gallery /></Tool>
        <Tool $gap={10}><Data /></Tool>
        <Tool $gap={9}><Pilcrow /></Tool>
        <Sep $gap={8} />
        <Tool $gap={8}><Help /></Tool>
      </Toolbar>

      <Toolbar $h={39} $pt={1}>
        <Grip />
        <Tool $gap={8}><Styles /></Tool>
        <Combo $gap={14} $w={116} $pad={5}><ComboText $ls={-0.05}>Preformatted Text</ComboText><Chevron /></Combo>
        <Combo $gap={10} $w={139}><ComboText $ls={-0.1}>Liberation Mono</ComboText><Chevron /></Combo>
        <Combo $gap={10} $w={59}><ComboText $ls={-0.5}>10</ComboText><Chevron /></Combo>
        <Tool $gap={13}><Letter c="B" /></Tool>
        <Tool $gap={9}><Letter c="i" italic /></Tool>
        <Tool $gap={9}><Letter c="U" line /></Tool>
        <Sep $gap={8} />
        <Tool $on $gap={5}><Align k="l" /></Tool>
        <Tool $gap={5}><Align k="c" /></Tool>
        <Tool $gap={10}><Align k="r" /></Tool>
        <Tool $gap={8}><Align k="j" /></Tool>
        <Sep $gap={8} />
        <Tool $gap={8}><List num /></Tool>
        <Tool $gap={9}><List /></Tool>
        <Tool $gap={9}><Dent /></Tool>
        <Tool $gap={9}><Dent right /></Tool>
        <Sep $gap={8} />
        <Tool $gap={7}><FontColor /></Tool><Drop $gap={7} />
        <Tool $gap={7}><Highlight /></Tool><Drop $gap={7} />
        <Tool $gap={7}><BackColor /></Tool><Drop $gap={7} />
      </Toolbar>

      <Work>
        <Canvas>
          <RulerRow>
            <RulerCorner><svg width="7" height="6"><path d="M1 0v4.500h6" stroke="#67625f" strokeWidth="2" fill="none" /></svg></RulerCorner>
            <HRuler><HTicks /></HRuler>
          </RulerRow>
          <DocRow>
            <VRuler><VTicks /></VRuler>
            <Pages>
              <Page>
                <Paragraph>
                  {"The game goes in turns and that is why we should keep information which turn is\nat each moment. Also it is a good idea we to have information when the game is\nover. "}<Caret />
                </Paragraph>
                <Crops><Crop /><Crop $left /></Crops>
              </Page>
              <PageGap />
              <NextPage />
            </Pages>
          </DocRow>
        </Canvas>
        <VScroll>
          <Chevron d={UP} />
          <VTrough><VThumb /></VTrough>
          <Chevron d={UP} />
          <svg width="9" height="13" viewBox="0 0 9 13" fill="none" stroke="#242120" strokeWidth="1.900"><path d="M1 7.500 4.500 11 8 7.500" /></svg>
          <NavButton $gap={9}><svg width="9" height="9" viewBox="0 0 9 9"><path d="M4.500 0 8.500 4.500h-8zM4.500 4l4 4h-8zM0 8h9v1H0z" fill="#1d1b1a" /></svg></NavButton>
          <NavButton $gap={5}><svg width="9" height="9"><circle cx="4.500" cy="4.500" r="3.600" fill="#5797bf" stroke="#1f486c" strokeWidth="1.300" /></svg></NavButton>
          <NavButton $gap={5}><svg width="9" height="9" viewBox="0 0 9 9"><path d="M4.500 9 8.500 4.500h-8zM4.500 5l4-4h-8zM0 0h9v1H0z" fill="#1d1b1a" /></svg></NavButton>
        </VScroll>
      </Work>

      <HScroll>
        <Left />
        <HTrough><HThumb /></HTrough>
        <ScrollArrow $gap={7}><Left /></ScrollArrow>
        <Right />
      </HScroll>

      <StatusBar>
        <StatusText $w={136} $ls={0.3}>Page 4 / 5</StatusText>
        <StatusText $w={277} $ls={0.37}>1831 words, 10207 characters</StatusText>
        <StatusText $w={191} $ls={0.5}>Default Style</StatusText>
        <StatusText $w={206} $ls={0.55}>English (USA)</StatusText>
        <StatusIcon $gap={18}><svg width="13" height="10" viewBox="0 0 13 10"><path d="M0 2h9v6H0z" fill="#84807d" /><path d="M9 .5h3M9 9.500h3M10.500 0v10" stroke="#84807d" /></svg></StatusIcon>
        <StatusIcon $gap={239}><svg width="12" height="14" viewBox="0 0 12 14" fill="none"><path d="M.5.5h8v10h-8z" stroke="#84807d" /><path d="M4 5.500l2 2 5-5" stroke="#5ca52a" strokeWidth="1.500" /></svg></StatusIcon>
        <StatusIcon $gap={20}><svg width="55" height="10" viewBox="0 0 55 10" fill="none"><PageMark c="#84807d" /><PageMark x={14.5} c="#4e4b49" /><PageMark x={24.5} c="#4e4b49" /><path d="M46.500 .5h-5l-3 3v6h8zM41.500.5v3h-3" stroke="#84807d" /><PageMark x={46.5} c="#84807d" /></svg></StatusIcon>
        <StatusIcon $gap={15}><svg width="127" height="12" viewBox="0 0 127 12" fill="none" stroke="#84807d"><path d="M0 6h8M118 6h8M122 2v8" strokeWidth="2" /><path d="M14 6h98M28.500 1v10M61.500 1v10" strokeWidth="1.500" /><circle cx="68" cy="6" r="3.800" fill="#fff" /></svg></StatusIcon>
        <StatusText $w={40} $ls={0.3}>160%</StatusText>
      </StatusBar>
    </Desktop>
  );
}
